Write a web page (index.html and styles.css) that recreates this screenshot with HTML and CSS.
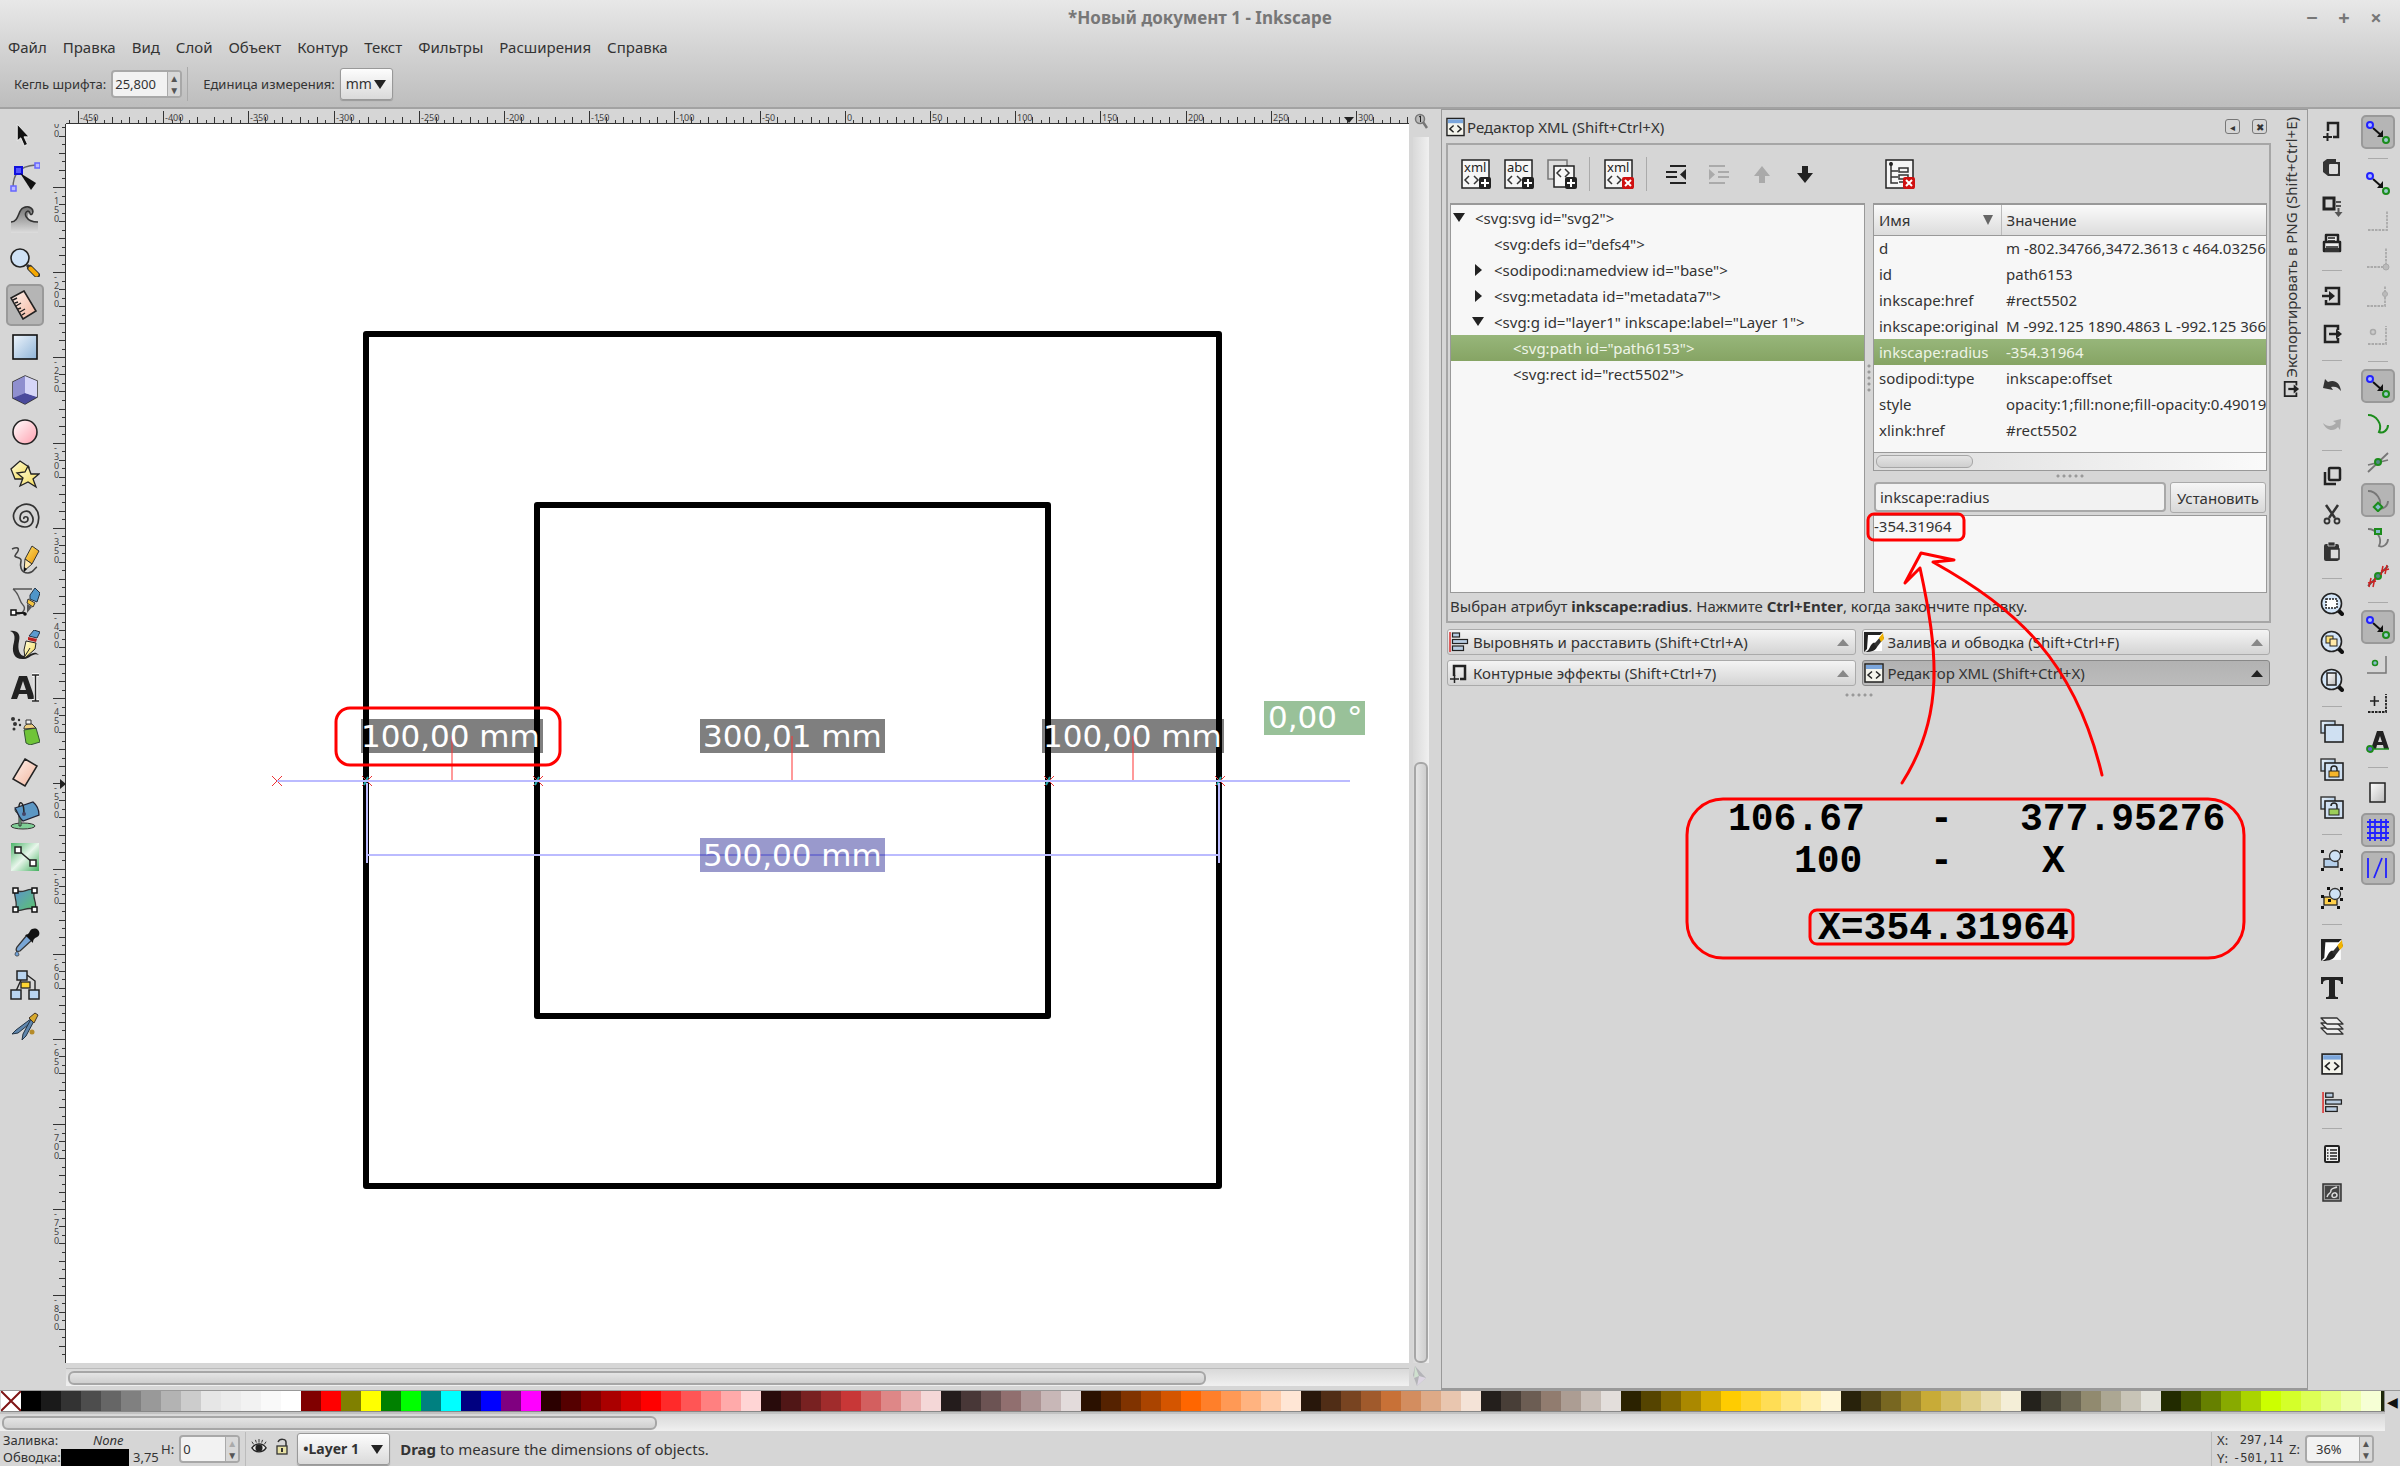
FILE: index.html
```html
<!DOCTYPE html>
<html lang="ru">
<head>
<meta charset="utf-8">
<title>*Новый документ 1 - Inkscape</title>
<link rel="stylesheet" href="styles.css">
</head>
<body>
<svg class="defs" width="0" height="0" aria-hidden="true">
  <defs>
    <linearGradient id="gBlue" x1="0" y1="0" x2="1" y2="1"><stop offset="0" stop-color="#eef5fc"/><stop offset="1" stop-color="#8fb4d8"/></linearGradient>
    <linearGradient id="gPink" x1="0" y1="0" x2="1" y2="1"><stop offset="0" stop-color="#fff"/><stop offset="1" stop-color="#ff9fae"/></linearGradient>
    <linearGradient id="gPeach" x1="0" y1="0" x2="1" y2="1"><stop offset="0" stop-color="#fff3ee"/><stop offset="1" stop-color="#f2b49c"/></linearGradient>
    <linearGradient id="gYellow" x1="0" y1="0" x2="1" y2="1"><stop offset="0" stop-color="#fffde0"/><stop offset="1" stop-color="#f3d94e"/></linearGradient>
    <linearGradient id="gOrange" x1="0" y1="0" x2="1" y2="1"><stop offset="0" stop-color="#ffe36a"/><stop offset="1" stop-color="#e58e00"/></linearGradient>
    <linearGradient id="gGreen" x1="0" y1="0" x2="1" y2="1"><stop offset="0" stop-color="#4db56a"/><stop offset="0.5" stop-color="#e8f6eb"/><stop offset="1" stop-color="#43b05f"/></linearGradient>
    <linearGradient id="gMesh" x1="0" y1="0" x2="1" y2="1"><stop offset="0" stop-color="#5c93cf"/><stop offset="1" stop-color="#5cc46b"/></linearGradient>
    <linearGradient id="gGrey" x1="0" y1="0" x2="0" y2="1"><stop offset="0" stop-color="#777"/><stop offset="1" stop-color="#ddd"/></linearGradient>
    <linearGradient id="gPage" x1="0" y1="0" x2="1" y2="1"><stop offset="0" stop-color="#fff"/><stop offset="1" stop-color="#bbb"/></linearGradient>
    <symbol id="snap" viewBox="0 0 24 24"><path d="M7 8l9 8" stroke="#111" stroke-width="2"/><path d="M17 17v-7l-6 7z" fill="#111"/><circle cx="4" cy="5" r="3" fill="#aab8ff" stroke="#22f" stroke-width="2"/><circle cx="20" cy="20" r="3" fill="#9cc" stroke="#1c8c1c" stroke-width="2"/></symbol>
    <symbol id="badge-add" viewBox="0 0 12 12"><rect width="12" height="12" rx="2" fill="#222"/><path d="M6 2v8M2 6h8" stroke="#fff" stroke-width="2"/></symbol>
    <symbol id="badge-del" viewBox="0 0 12 12"><rect width="12" height="12" rx="2" fill="#d01010"/><path d="M3 3l6 6M9 3l-6 6" stroke="#fff" stroke-width="2"/></symbol>
    <symbol id="xmlwin" viewBox="0 0 20 20"><rect x="1" y="1" width="18" height="18" fill="#f4f4ec" stroke="#222" stroke-width="1.500"/><rect x="2" y="2" width="16" height="4" fill="#7ba6dc"/><path d="M8 8.500l-4 3.500 4 3.500M12 8.500l4 3.500-4 3.500" fill="none" stroke="#222" stroke-width="1.500"/></symbol>
    <symbol id="effects" viewBox="0 0 20 20"><path d="M5 13V3h11v13h-5" fill="none" stroke="#222" stroke-width="2.500"/><path d="M1 16h9M5.500 12v8" stroke="#222" stroke-width="1.500"/></symbol>
    <symbol id="align" viewBox="0 0 20 20"><path d="M1 0v20" stroke="#d33" stroke-width="1.500"/><g fill="#b9cde2" stroke="#222" stroke-width="1.200"><rect x="3.500" y="1" width="7" height="4"/><rect x="3.500" y="7.500" width="15" height="4"/><rect x="3.500" y="14" width="11" height="4.500"/></g></symbol>
    <symbol id="fill" viewBox="0 0 20 20"><rect x="1" y="1" width="17" height="18" fill="#fff"/><path d="M0 0h19l-3 3H4L3 17l-3 3z" fill="#222"/><path d="M1 20c5-1 4-6 8-9 2-1 5 1 4 4-1 3-5 5-12 5z" fill="#222"/><path d="M10 12l8-9 2 3-7 9z" fill="#333"/><path d="M15 6l4-5 1 6-3 3z" fill="#f2b300"/></symbol>
    <symbol id="export" viewBox="0 0 20 20"><path d="M16 6V2H3v16h13v-4" fill="none" stroke="#222" stroke-width="2"/><path d="M7 10h8" stroke="#222" stroke-width="2.500"/><path d="M13 5l6 5-6 5z" fill="#222"/></symbol>
    <symbol id="magnify" viewBox="0 0 24 24"><path d="M18 18l4 4" stroke="#111" stroke-width="4" stroke-linecap="round"/><circle cx="11.500" cy="11.500" r="10" fill="#d4e6f8" stroke="#222" stroke-width="1.600"/></symbol>
    <symbol id="twin" viewBox="0 0 24 24"><rect x="1" y="1" width="14" height="12" fill="url(#gBlue)" stroke="#333" stroke-width="1.400"/><rect x="5" y="5" width="18" height="17" fill="#cfe0f2" stroke="#222" stroke-width="1.600"/></symbol>
  </defs>
</svg>

<header class="top">
  <div class="titlebar">
    <h1>*Новый документ 1 - Inkscape</h1>
    <div class="winbtns"><button aria-label="Свернуть">−</button><button aria-label="Развернуть">+</button><button aria-label="Закрыть">×</button></div>
  </div>
  <nav class="menubar">
    <button>Файл</button><button>Правка</button><button>Вид</button><button>Слой</button><button>Объект</button><button>Контур</button><button>Текст</button><button>Фильтры</button><button>Расширения</button><button>Справка</button>
  </nav>
  <div class="options">
    <label for="fontsize">Кегль шрифта:</label>
    <span class="spin"><input id="fontsize" class="w54" value="25,800"><span class="arrows"><button aria-label="Больше">▲</button><button aria-label="Меньше">▼</button></span></span>
    <span class="vsep"></span>
    <label for="unit">Единица измерения:</label>
    <span class="combo unit"><select id="unit"><option>mm</option></select></span>
  </div>
</header>

<main class="work">
  <div class="toolbox">
    <button aria-label="Выделитель"><svg viewBox="0 0 30 30"><path d="M7.300 4.300v16.500l3.500-3 3.500 8 3.200-1.500-3.500-7.500h5z" fill="#111" stroke="#fff" stroke-width=".8"/></svg></button>
    <button aria-label="Узлы"><svg viewBox="0 0 30 30"><path d="M3 26C3 13 8 4 26 3" fill="none" stroke="#666" stroke-width="1.400"/><g fill="#bbf" stroke="#66f" stroke-width="1.500"><rect x="1" y="24" width="5" height="5"/><rect x="25" y="1" width="5" height="5"/></g><rect x="5" y="5" width="7" height="7" fill="#55f" stroke="#11d" stroke-width="2"/><path d="M10 11l16 10-5 7z" fill="#111"/></svg></button>
    <button aria-label="Корректор"><svg viewBox="0 0 30 30"><path d="M1 17c8 0 7-13 14-14 5-1 8 1 7 4-1 2-4 0-4 3-1 4 3 6 10 7v11H1z" fill="url(#gGrey)"/><path d="M1 17c8 0 7-12 12-14 6-3 12 1 9 6-3 2-1-3-4-3-5 1-3 11 10 11" fill="none" stroke="#333" stroke-width="1.600"/></svg></button>
    <button aria-label="Масштаб"><svg viewBox="0 0 30 30"><path d="M17 18l3 3" stroke="#333" stroke-width="3"/><path d="M20 21l7 7" stroke="#333" stroke-width="6" stroke-linecap="round"/><path d="M20.500 21.500l6 6" stroke="#f6a800" stroke-width="4" stroke-linecap="round"/><circle cx="10" cy="11" r="9" fill="#cfe2f6" stroke="#222" stroke-width="1.600"/></svg></button>
    <button class="on" aria-label="Измеритель"><svg viewBox="0 0 30 30"><path d="M1 8L14 1l12 20-13 8z" fill="url(#gPeach)" stroke="#222" stroke-width="1.600"/><path d="M3 10l4-2M5 13l3-1M6 16l5-3M8 19l3-1M10 22l5-3M12 25l3-2" stroke="#222" stroke-width="1.400"/></svg></button>
    <button aria-label="Прямоугольник"><svg viewBox="0 0 30 30"><rect x="3" y="3" width="24" height="24" fill="url(#gBlue)" stroke="#111" stroke-width="1.600"/></svg></button>
    <button aria-label="Параллелепипед"><svg viewBox="0 0 30 30"><path d="M15 1l12 5v16l-12 7-12-6V7z" fill="#b8b8ea" stroke="#333" stroke-width="1.500"/><path d="M15 1L3 7v16l12-5z" fill="#8f8fcf"/><path d="M3 23l12-5 12 4-12 7z" fill="#4a4a9c"/><path d="M15 1l12 5v16l-12-4z" fill="#d6d6f8"/></svg></button>
    <button aria-label="Эллипс"><svg viewBox="0 0 30 30"><circle cx="15" cy="15" r="12" fill="url(#gPink)" stroke="#222" stroke-width="1.600"/></svg></button>
    <button aria-label="Звезда"><svg viewBox="0 0 30 30"><path d="M10 1l9 6-2 12H5L1 9z" fill="url(#gYellow)" stroke="#222" stroke-width="1.300"/><path d="M18 6l3 8h8l-6 5 3 8-8-5-8 4 3-8-6-5 8-1z" fill="url(#gYellow)" stroke="#222" stroke-width="1.300"/></svg></button>
    <button aria-label="Спираль"><svg viewBox="0 0 30 30"><path d="M14 17c-1-3 4-3 4 0 0 5-8 4-8-1 0-7 8-9 11-4 5 7 0 13-6 13C6 25 2 17 4 11 7 3 16 0 23 4c7 5 7 15 3 22" fill="none" stroke="#333" stroke-width="1.700"/></svg></button>
    <button aria-label="Карандаш"><svg viewBox="0 0 30 30"><path d="M2 4c7-3 8 0 4 5-4 5 6 2 5 7-1 4-1 12 7 12 6 0 6-5 9-6" fill="none" stroke="#444" stroke-width="1.600"/><path d="M15 14l7-13 7 5-7 13z" fill="url(#gOrange)" stroke="#333"/><path d="M15 14l7 5-8 7z" fill="#ffe9b0" stroke="#333"/><path d="M14 22l3 2-3 3z" fill="#111"/></svg></button>
    <button aria-label="Перо"><svg viewBox="0 0 30 30"><path d="M3 2h19M3 2c7 5 6 13 10 16 3 3 1 9-6 9" fill="none" stroke="#555" stroke-width="1.400"/><path d="M4 26h11" stroke="#111" stroke-width="1.800"/><rect x="1" y="23" width="5" height="5" fill="#fff" stroke="#111" stroke-width="1.500"/><circle cx="15" cy="27" r="1.800" fill="#111"/><path d="M20 8l5-7 5 5-3 9-7-3z" fill="#4f95c9" stroke="#234"/><path d="M18 12l7 4-2 4-6-4z" fill="#f6c644" stroke="#333"/><path d="M17 17l5 3-5 6z" fill="#555"/></svg></button>
    <button aria-label="Каллиграфическое перо"><svg viewBox="0 0 30 30"><path d="M0 1c7-1 11 3 9 10-2 9 1 16 7 15 5-1 8-6 13-1-6-3-8 3-15 4C4 30 1 22 4 12c1-5 1-9-4-11z" fill="#222"/><path d="M19 6l5-6 6 2-3 6z" fill="#5b9bd0" stroke="#234"/><path d="M18 7l9 2-1 3-8-2z" fill="#b22"/><path d="M16 11l10 2-1 6-10 9-1-8z" fill="url(#gYellow)" stroke="#222"/><path d="M15 26l5-8" stroke="#222"/></svg></button>
    <button aria-label="Текст"><svg viewBox="0 0 30 30"><path d="M1 27L9 4h8l8 23h-7l-1-5H9l-2 5zm9-9h6l-3-9z" fill="#222" fill-rule="evenodd"/><path d="M22 3h7M22 29h7M25.500 3v26" stroke="#fff" stroke-width="3.500"/><path d="M22 3h7M22 29h7M25.500 3v26" stroke="#222" stroke-width="1.500"/></svg></button>
    <button aria-label="Распылитель"><svg viewBox="0 0 30 30"><g fill="#333"><circle cx="3" cy="4" r="2"/><circle cx="5" cy="9" r="2"/><circle cx="4" cy="14" r="1.500"/><circle cx="9" cy="5" r="1.200"/><circle cx="10" cy="10" r="1.200"/></g><path d="M14 15l12-2 4 14-10 3-4-2z" fill="#6fc438" stroke="#353"/><path d="M14 14c0-4 3-6 8-5l4 4z" fill="#f0d080" stroke="#333"/><path d="M16 5h5v4h-5z" fill="#eee" stroke="#333"/></svg></button>
    <button aria-label="Ластик"><svg viewBox="0 0 30 30"><path d="M15 2l12 7-12 20-12-7z" fill="url(#gPeach)" stroke="#222" stroke-width="1.500"/></svg></button>
    <button aria-label="Заливка"><svg viewBox="0 0 30 30"><ellipse cx="13" cy="26" rx="12" ry="3" fill="#7fce96" stroke="#333"/><path d="M5 9C5 14 9 12 9 18v8h2v-8l4 1z" fill="#7fce96" stroke="#333"/><path d="M5 8l18-6c5 4 6 9 6 13l-16 6C9 18 8 13 5 8z" fill="#5c97c4" stroke="#223" stroke-width="1.300"/><path d="M9 7c0-7 5-6 5 7" fill="none" stroke="#222" stroke-width="1.500"/><circle cx="14" cy="14" r="2" fill="#446"/></svg></button>
    <button aria-label="Градиент"><svg viewBox="0 0 30 30"><rect x="1" y="1" width="28" height="28" fill="url(#gGreen)"/><path d="M8 8l15 13" stroke="#222" stroke-width="1.500"/><g fill="#fff" stroke="#222" stroke-width="1.500"><rect x="5" y="5" width="6" height="6"/><rect x="20" y="18" width="6" height="6"/></g></svg></button>
    <button aria-label="Сетка градиента"><svg viewBox="0 0 30 30"><path d="M5 5c8 5 12-3 20 0-4 8 3 12 0 20-8-5-12 3-20 0 4-8-2-12 0-20z" fill="url(#gMesh)" stroke="#333" stroke-width="1.300"/><g fill="#fff" stroke="#111" stroke-width="1.500"><rect x="3" y="3" width="5" height="5"/><rect x="22" y="3" width="5" height="5"/><rect x="3" y="22" width="5" height="5"/><rect x="22" y="22" width="5" height="5"/></g></svg></button>
    <button aria-label="Пипетка"><svg viewBox="0 0 30 30"><path d="M17 8l5 5L10 24c-3 1-5 0-3-4z" fill="#79a6d6" stroke="#333" stroke-width="1.300"/><path d="M15 8c3 0 4-2 5-4 2-3 6-3 8-1s2 6-1 7c-2 1-4 2-4 6z" fill="#111"/><path d="M7 24c3 4 2 5 0 5s-3-2 0-5z" fill="#6fa1d8" stroke="#333" stroke-width=".8"/></svg></button>
    <button aria-label="Соединительные линии"><svg viewBox="0 0 30 30"><path d="M11 10L6 21M17 5l8 6v10" fill="none" stroke="#222" stroke-width="1.400"/><g fill="#b9d4ef" stroke="#222" stroke-width="1.500"><rect x="7" y="1" width="10" height="9"/><rect x="1" y="20" width="10" height="9"/><rect x="19" y="20" width="10" height="9"/></g><rect x="11" y="12" width="9" height="6" fill="#ffd633" stroke="#222" stroke-width="1.300"/></svg></button>
    <button aria-label="Контурные эффекты"><svg viewBox="0 0 30 30"><path d="M22 6L6 18l-4 4 6-1L23 9z" fill="#5f86ad" stroke="#234"/><path d="M24 9l-8 15-4 4 1-6 8-15z" fill="#5f86ad" stroke="#234"/><path d="M19 6l6-5 3 2-4 8z" fill="#d8a92c" stroke="#432"/><circle cx="22" cy="20" r="2.500" fill="#b58b2a"/></svg></button>
  </div>

  <section class="view">
    <svg class="ruler-h" id="rulerH" aria-hidden="true"></svg>
    <svg class="ruler-v" id="rulerV" aria-hidden="true"></svg>
    <div class="canvas">
      <svg class="drawing" role="img" aria-label="Измерения">
        <g fill="none" stroke="#000" stroke-width="6" stroke-linejoin="round"><rect x="300" y="210" width="853" height="852"/><rect x="471" y="381" width="511" height="511"/></g>
        <path d="M206 652l10 10m0-10l-10 10M296 652l10 10m0-10l-10 10M467 652l10 10m0-10l-10 10M978 652l10 10m0-10l-10 10M1149 652l10 10m0-10l-10 10" fill="none" stroke="#e33"/>
        <path d="M302 653l-4 8M473 653l-4 8M984 653l-4 8M1155 653l-4 8" stroke="#2aa" stroke-width="2"/>
        <path d="M211 657H1284M301 731H1153M301 659v80M1153 659v80" stroke="#bbf" stroke-width="2" fill="none"/>
        <g fill="#000" fill-opacity=".5"><rect x="295" y="595" width="182" height="34"/><rect x="634" y="595" width="185" height="34"/><rect x="976" y="595" width="182" height="34"/></g>
        <rect x="634" y="714" width="185" height="34" fill="#00007f" fill-opacity=".4"/>
        <rect x="1198" y="577" width="101" height="34" fill="#99c199"/>
        <path d="M386 612v44M726 612v44M1067 612v44" stroke="#f33" stroke-opacity=".5" stroke-width="2"/>
        <g class="measure"><text x="295" y="623">100,00 mm</text><text x="637" y="623">300,01 mm</text><text x="977" y="623">100,00 mm</text><text x="637" y="742">500,00 mm</text><text x="1202" y="604">0,00 °</text></g>
        <rect x="270" y="584" width="224" height="57" rx="14" fill="none" stroke="red" stroke-width="3"/>
      </svg>
    </div>
    <div class="vscroll">
      <svg viewBox="0 0 14 16" width="14" height="16"><circle cx="6" cy="6" r="4.500" fill="#bbb" stroke="#777" stroke-width="1.500"/><path d="M9 9l4 6" stroke="#777" stroke-width="2.500"/><path d="M5 4l1.500-1v6" fill="none" stroke="#222"/></svg>
      <div class="vtrough"><div class="thumb"></div></div>
    </div>
    <div class="hscroll"><div class="thumb"></div></div>
    <svg class="cms" viewBox="0 0 16 20" width="16" height="20"><path d="M3 0l11 12-9 8L1 9z" fill="#b4b4b8"/><path d="M3 0l4 10-5 2z" fill="#cfe0cf"/><path d="M7 10l7 2-9 8z" fill="#dcd5e2"/></svg>
  </section>

  <aside class="dock">
    <div class="dock-main">
      <div class="dock-title"><svg width="19" height="22"><use href="#xmlwin"/></svg><span>Редактор XML (Shift+Ctrl+X)</span><button aria-label="Свернуть панель">◂</button><button aria-label="Закрыть панель">✖</button></div>
      <section class="xml">
        <div class="xmlbar">
          <button aria-label="Новый элемент"><svg viewBox="0 0 30 30"><rect x="1" y="1" width="27" height="28" fill="#f6f6f6" stroke="#222" stroke-width="1.500"/><path d="M8 17l-4 4 4 4M13 17l4 4-4 4" fill="none" stroke="#333" stroke-width="1.500"/><text x="3" y="13" class="ico-t">xml</text><use href="#badge-add" x="18" y="18" width="12" height="12"/></svg></button>
          <button aria-label="Новый текст"><svg viewBox="0 0 30 30"><rect x="1" y="1" width="27" height="28" fill="#f6f6f6" stroke="#222" stroke-width="1.500"/><path d="M8 17l-4 4 4 4M13 17l4 4-4 4" fill="none" stroke="#333" stroke-width="1.500"/><text x="3" y="13" class="ico-t">abc</text><use href="#badge-add" x="18" y="18" width="12" height="12"/></svg></button>
          <button aria-label="Дублировать узел"><svg viewBox="0 0 30 30"><rect x="1" y="1" width="19" height="19" fill="#ddd" stroke="#777" stroke-width="1.500"/><rect x="7" y="7" width="20" height="21" fill="#f6f6f6" stroke="#222" stroke-width="1.500"/><path d="M14 10l-4 4 4 4M18 10l4 4-4 4" fill="none" stroke="#333" stroke-width="1.500"/><use href="#badge-add" x="18" y="18" width="12" height="12"/></svg></button>
          <i></i>
          <button aria-label="Удалить узел"><svg viewBox="0 0 30 30"><rect x="1" y="1" width="27" height="28" fill="#f6f6f6" stroke="#222" stroke-width="1.500"/><path d="M8 17l-4 4 4 4M13 17l4 4-4 4" fill="none" stroke="#333" stroke-width="1.500"/><text x="3" y="13" class="ico-t">xml</text><use href="#badge-del" x="18" y="18" width="12" height="12"/></svg></button>
          <i></i>
          <button aria-label="Уменьшить отступ"><svg viewBox="0 0 30 30"><path d="M9 7h16M5 13h11M5 18h11M9 24h16" stroke="#222" stroke-width="2"/><path d="M25 10v11l-6-5.500z" fill="#222"/></svg></button>
          <button aria-label="Увеличить отступ" disabled><svg viewBox="0 0 30 30"><path d="M5 7h16M14 13h11M14 18h11M5 24h16" stroke="#aaa" stroke-width="2"/><path d="M5 10v11l6-5.500z" fill="#aaa"/></svg></button>
          <button aria-label="Вверх" disabled><svg viewBox="0 0 30 30"><path d="M15 7l8 10h-5v7h-6v-7H7z" fill="#aaa"/></svg></button>
          <button aria-label="Вниз"><svg viewBox="0 0 30 30"><path d="M15 24l8-10h-5V7h-6v7H7z" fill="#222"/></svg></button>
          <button class="delattr" aria-label="Удалить атрибут"><svg viewBox="0 0 30 30"><rect x="1" y="1" width="27" height="28" fill="#f6f6f6" stroke="#222" stroke-width="1.500"/><path d="M6 3v21h7M6 12h7M6 18h7M14 9h9v4h-9zM14 16h9v4h-9zM14 23h5" fill="none" stroke="#333" stroke-width="1.500"/><circle cx="6" cy="5" r="2" fill="#222"/><use href="#badge-del" x="18" y="18" width="12" height="12"/></svg></button>
        </div>
        <div class="panes">
          <ul class="tree">
            <li class="l0 open">&lt;svg:svg id="svg2"&gt;</li>
            <li class="l1">&lt;svg:defs id="defs4"&gt;</li>
            <li class="l1 closed">&lt;sodipodi:namedview id="base"&gt;</li>
            <li class="l1 closed">&lt;svg:metadata id="metadata7"&gt;</li>
            <li class="l1 open">&lt;svg:g id="layer1" inkscape:label="Layer 1"&gt;</li>
            <li class="l2 sel">&lt;svg:path id="path6153"&gt;</li>
            <li class="l2">&lt;svg:rect id="rect5502"&gt;</li>
          </ul>
          <div class="grip grip-v"></div>
          <div class="attrs">
            <div class="attr-list">
              <table>
                <thead><tr><th>Имя<span class="sort"></span></th><th>Значение</th></tr></thead>
                <tbody>
                  <tr><td>d</td><td>m -802.34766,3472.3613 c 464.03256,0</td></tr>
                  <tr><td>id</td><td>path6153</td></tr>
                  <tr><td>inkscape:href</td><td>#rect5502</td></tr>
                  <tr><td>inkscape:original</td><td>M -992.125 1890.4863 L -992.125 3664</td></tr>
                  <tr class="sel"><td>inkscape:radius</td><td>-354.31964</td></tr>
                  <tr><td>sodipodi:type</td><td>inkscape:offset</td></tr>
                  <tr><td>style</td><td>opacity:1;fill:none;fill-opacity:0.49019608</td></tr>
                  <tr><td>xlink:href</td><td>#rect5502</td></tr>
                </tbody>
              </table>
              <div class="trough"><div class="thumb"></div></div>
            </div>
            <div class="grip grip-h"></div>
            <div class="setrow"><input aria-label="Имя атрибута" value="inkscape:radius"><button>Установить</button></div>
            <textarea aria-label="Значение атрибута">-354.31964</textarea>
          </div>
        </div>
        <p class="hint">Выбран атрибут <b>inkscape:radius</b>. Нажмите <b>Ctrl+Enter</b>, когда закончите правку.</p>
      </section>
      <div class="tabs">
        <button><svg width="20" height="20"><use href="#align"/></svg>Выровнять и расставить (Shift+Ctrl+A)<span class="up"></span></button>
        <button><svg width="20" height="20"><use href="#fill"/></svg>Заливка и обводка (Shift+Ctrl+F)<span class="up"></span></button>
        <button><svg width="20" height="20"><use href="#effects"/></svg>Контурные эффекты (Shift+Ctrl+7)<span class="up"></span></button>
        <button class="on"><svg width="20" height="20"><use href="#xmlwin"/></svg>Редактор XML (Shift+Ctrl+X)<span class="up"></span></button>
      </div>
      <div class="grip grip-h"></div>
    </div>
    <div class="side"><button class="sidetab"><span>Экспортировать в PNG (Shift+Ctrl+E)</span></button><svg width="18" height="18"><use href="#export"/></svg></div>
    <svg class="notes" role="img" aria-label="Пропорция">
      <g fill="none" stroke="red" stroke-width="3" stroke-linejoin="round" stroke-linecap="round" transform="translate(-1442 -109)">
        <rect x="1868" y="513" width="96" height="26" rx="6"/>
        <rect x="1687" y="798" width="557" height="159" rx="36"/>
        <rect x="1810" y="909" width="263" height="34" rx="7"/>
        <path d="M1902 782C1945 715 1938 650 1920 567L1905 582 1921 552 1954 559 1933 561C2017 608 2075 660 2102 774"/>
      </g>
      <g class="calc"><text x="286" y="720">106.67</text><text x="488" y="720">-</text><text x="578" y="720">377.95276</text><text x="352" y="762">100</text><text x="488" y="762">-</text><text x="600" y="762">X</text><text x="376" y="829">X=354.31964</text></g>
    </svg>
  </aside>

  <div class="commands">
    <button aria-label="Создать"><svg viewBox="0 0 24 24"><path d="M8 13V5h10v14h-5" fill="none" stroke="#222" stroke-width="2.500"/><path d="M3 19h9M7.500 15v8" stroke="#222" stroke-width="2"/></svg></button>
    <button aria-label="Открыть"><svg viewBox="0 0 24 24"><path d="M3 6l4-3h9v3h4v14H8L3 16z" fill="#333"/><rect x="9" y="8" width="9" height="10" rx="1" fill="#ddd"/></svg></button>
    <button aria-label="Сохранить"><svg viewBox="0 0 24 24"><rect x="4" y="4" width="10" height="11" fill="none" stroke="#222" stroke-width="3"/><path d="M16 8h5M16 12h5" stroke="#555" stroke-width="2"/><path d="M18.500 14v4" stroke="#555" stroke-width="2"/><path d="M14.500 18h8l-4 5z" fill="#555"/></svg></button>
    <button aria-label="Печать"><svg viewBox="0 0 24 24"><path d="M6 10V3h12v7M4 10h16v9H4z" fill="#eee" stroke="#222" stroke-width="2.500" stroke-linejoin="round"/><path d="M8 6h7M8 9h7M6 15h12" stroke="#222" stroke-width="1.500"/><path d="M5 16h14v4H5z" fill="#333"/></svg></button>
    <hr>
    <button aria-label="Импорт"><svg viewBox="0 0 24 24"><path d="M6 8V4h13v16H6v-4" fill="none" stroke="#222" stroke-width="2.500"/><path d="M2 12h8" stroke="#222" stroke-width="2.500"/><path d="M9 7l6 5-6 5z" fill="#222"/></svg></button>
    <button aria-label="Экспорт"><svg viewBox="0 0 24 24"><path d="M18 8V4H5v16h13v-4" fill="none" stroke="#222" stroke-width="2.500"/><path d="M9 12h8" stroke="#222" stroke-width="2.500"/><path d="M16 7l6 5-6 5z" fill="#222"/></svg></button>
    <hr>
    <button aria-label="Отменить"><svg viewBox="0 0 24 24"><path d="M3 14l2-9 3 3c6-3 12 0 13 9-3-4-6-5-10-4l2 3z" fill="#333"/></svg></button>
    <button aria-label="Повторить" disabled><svg viewBox="0 0 24 24"><path d="M21 7l-8 2 3 2c-4 4-9 4-13 0 3 8 11 9 15 4l2 3z" fill="#aaa"/></svg></button>
    <hr>
    <button aria-label="Копировать"><svg viewBox="0 0 24 24"><rect x="9" y="4" width="11" height="12" rx="1" fill="none" stroke="#222" stroke-width="2.500"/><path d="M5 8v12h11" fill="none" stroke="#222" stroke-width="2.500"/></svg></button>
    <button aria-label="Вырезать"><svg viewBox="0 0 24 24"><path d="M6 3l9 13M18 3L9 16" stroke="#333" stroke-width="2.500"/><circle cx="7" cy="19" r="2.500" fill="none" stroke="#333" stroke-width="1.800"/><circle cx="17" cy="19" r="2.500" fill="none" stroke="#333" stroke-width="1.800"/></svg></button>
    <button aria-label="Вставить"><svg viewBox="0 0 24 24"><rect x="4" y="4" width="15" height="17" rx="2" fill="#333"/><path d="M8 2h7v4H8z" fill="#333" stroke="#ddd" stroke-width=".8"/><rect x="10" y="9" width="9" height="10" fill="#ddd" stroke="#333" stroke-width="1.500"/></svg></button>
    <hr>
    <button aria-label="Масштаб по выделению"><svg viewBox="0 0 24 24"><use href="#magnify"/><rect x="6" y="7" width="11" height="9" fill="#fff" stroke="#222" stroke-width="1.500" stroke-dasharray="2 1"/></svg></button>
    <button aria-label="Масштаб по рисунку"><svg viewBox="0 0 24 24"><use href="#magnify"/><rect x="6" y="6" width="7" height="7" fill="#ffe27a" stroke="#222"/><rect x="10" y="9" width="7" height="7" fill="#ffe9a8" stroke="#222"/></svg></button>
    <button aria-label="Масштаб по странице"><svg viewBox="0 0 24 24"><use href="#magnify"/><rect x="7" y="5" width="9" height="12" fill="url(#gPage)" stroke="#222" stroke-width="1.500"/></svg></button>
    <hr>
    <button aria-label="Дублировать"><svg viewBox="0 0 24 24"><use href="#twin"/></svg></button>
    <button aria-label="Клонировать"><svg viewBox="0 0 24 24"><use href="#twin"/><path d="M11 13v-2c0-4 6-4 6 0v2" fill="none" stroke="#222" stroke-width="1.500"/><rect x="9" y="13" width="10" height="6" fill="#f5b52a" stroke="#222"/></svg></button>
    <button aria-label="Отсоединить клон"><svg viewBox="0 0 24 24"><use href="#twin"/><path d="M11 10c0-4 6-4 6 0v4" fill="none" stroke="#222" stroke-width="1.500"/><rect x="9" y="13" width="10" height="6" fill="#9cce5a" stroke="#222"/></svg></button>
    <hr>
    <button aria-label="Сгруппировать"><svg viewBox="0 0 24 24"><path d="M4 11h7l7 3v5H4z" fill="#b5cfea" stroke="#222" stroke-width="1.300"/><circle cx="15" cy="8" r="5.500" fill="#cfe2f5" stroke="#333" stroke-width="1.300"/><path d="M1 2h3v3H1zM20 2h3v3h-3zM1 20h3v3H1zM20 20h3v3h-3z" fill="#111"/></svg></button>
    <button aria-label="Разгруппировать"><svg viewBox="0 0 24 24"><rect x="4" y="11" width="13" height="8" fill="#ffd04a" stroke="#222" stroke-width="1.300"/><circle cx="15" cy="8" r="5.500" fill="#cfe2f5" stroke="#333" stroke-width="1.300"/><path d="M7 1h3v3H7zM20 1h3v3h-3zM1 9h3v3H1zM20 12h3v3h-3zM1 20h3v3H1zM17 20h3v3h-3zM8 13h3v3H8z" fill="#111"/></svg></button>
    <hr>
    <button aria-label="Заливка и обводка"><svg viewBox="0 0 24 24"><use href="#fill" x="1" y="1" width="22" height="22"/></svg></button>
    <button aria-label="Текст и шрифт"><svg viewBox="0 0 24 24"><path d="M1 1h22v7h-2c0-3-1-4-6-4v15c0 2 1 2 3 2v2H6v-2c2 0 3 0 3-2V4C4 4 3 5 3 8H1z" fill="#222"/></svg></button>
    <button aria-label="Слои"><svg viewBox="0 0 24 24"><g fill="#eee" stroke="#333" stroke-width="1.300" stroke-linejoin="round"><path d="M1 14h16l6 6H7z"/><path d="M1 9h16l6 6H7z"/><path d="M1 4h16l6 6H7z"/></g></svg></button>
    <button aria-label="Редактор XML"><svg viewBox="0 0 24 24"><use href="#xmlwin" x="1" y="1" width="22" height="22"/></svg></button>
    <button aria-label="Выровнять"><svg viewBox="0 0 24 24"><use href="#align" x="2" y="2" width="21" height="21"/></svg></button>
    <hr>
    <button aria-label="Настройки"><svg viewBox="0 0 24 24"><rect x="5" y="4" width="14" height="16" rx="1" fill="#eee" stroke="#222" stroke-width="2"/><path d="M10 8h7M10 11h7M10 14h7M10 17h7M7 8h1.500M7 11h1.500M7 14h1.500M7 17h1.500" stroke="#222" stroke-width="1.300"/></svg></button>
    <button aria-label="Параметры документа"><svg viewBox="0 0 24 24"><rect x="3" y="4" width="18" height="17" fill="#999" stroke="#333" stroke-width="1.500"/><rect x="5" y="6" width="14" height="13" fill="#444"/><path d="M7 17c2-6 4-2 4-7 1-2 4-2 6-3M12 16c0-4 5-4 5-1s-5 3-5 1z" fill="none" stroke="#ddd" stroke-width="1.500"/></svg></button>
  </div>

  <div class="snapbar">
    <button class="on" aria-label="Прилипание"><svg><use href="#snap"/></svg></button>
    <hr>
    <button aria-label="Рамки"><svg><use href="#snap"/></svg></button>
    <button aria-label="Края рамок" disabled><svg viewBox="0 0 24 24"><path d="M2 21h19V2" fill="none" stroke="#aaa" stroke-width="1.800" stroke-dasharray="2.500 1"/></svg></button>
    <button aria-label="Углы рамок" disabled><svg viewBox="0 0 24 24"><path d="M1 20h19V1" fill="none" stroke="#aaa" stroke-width="1.800" stroke-dasharray="2.500 1"/><circle cx="20" cy="20" r="3" fill="#bbb" stroke="#aaa"/></svg></button>
    <button aria-label="Середины краёв" disabled><svg viewBox="0 0 24 24"><path d="M1 21h18V1" fill="none" stroke="#aaa" stroke-width="1.800" stroke-dasharray="2.500 1"/><circle cx="19" cy="9" r="2.500" fill="#bbb" stroke="#aaa"/></svg></button>
    <button aria-label="Центры рамок" disabled><svg viewBox="0 0 24 24"><path d="M2 21h18V3" fill="none" stroke="#aaa" stroke-width="1.800" stroke-dasharray="2.500 1"/><circle cx="7" cy="9" r="2.500" fill="#ccc" stroke="#aaa" stroke-width="1.500"/></svg></button>
    <hr>
    <button class="on" aria-label="Узлы"><svg><use href="#snap"/></svg></button>
    <button aria-label="Контуры"><svg viewBox="0 0 24 24"><path d="M2 3c8 0 15 9 11 17 4 2 9-2 9-7" fill="none" stroke="#1c8c1c" stroke-width="2"/></svg></button>
    <button aria-label="Пересечения"><svg viewBox="0 0 24 24"><path d="M2 15l20-5M2 22L22 3" stroke="#777" stroke-width="1.800"/><circle cx="12" cy="12" r="3" fill="#588" stroke="#1c8c1c" stroke-width="2"/></svg></button>
    <button class="on" aria-label="Острые узлы"><svg viewBox="0 0 24 24"><path d="M2 3c8 0 15 9 11 17 4 2 9-2 9-7" fill="none" stroke="#777" stroke-width="1.800"/><rect x="-3" y="-3" width="6" height="6" fill="#8bc" stroke="#1c8c1c" stroke-width="2" transform="translate(12 19) rotate(45)"/></svg></button>
    <button aria-label="Сглаженные узлы"><svg viewBox="0 0 24 24"><path d="M2 3c8 0 15 9 11 17 4 2 9-2 9-7" fill="none" stroke="#777" stroke-width="1.800"/><rect x="9" y="3" width="6" height="5" fill="#8bc" stroke="#1c8c1c" stroke-width="2"/></svg></button>
    <button aria-label="Середины линий"><svg viewBox="0 0 24 24"><path d="M2 22L22 2" stroke="#555" stroke-width="1.800"/><circle cx="12" cy="12" r="3" fill="#588" stroke="#1c8c1c" stroke-width="2"/><path d="M5 14l-2 9M9 14l-2 9M2 19l8-2M17 2l-2 9M21 1l-2 9M15 7l8-2" stroke="#c22" stroke-width="1.500"/></svg></button>
    <hr>
    <button class="on" aria-label="Другие точки"><svg><use href="#snap"/></svg></button>
    <button aria-label="Центры объектов"><svg viewBox="0 0 24 24"><path d="M1 20h19V3" fill="none" stroke="#777" stroke-width="1.500"/><circle cx="9" cy="10" r="2.500" fill="#8bc" stroke="#1c8c1c" stroke-width="1.500"/></svg></button>
    <button aria-label="Центры вращения"><svg viewBox="0 0 24 24"><path d="M2 21h18V3" fill="none" stroke="#222" stroke-width="1.800" stroke-dasharray="2.500 1"/><path d="M4 10h9M8.500 5v10" stroke="#222" stroke-width="1.600"/></svg></button>
    <button aria-label="Линия шрифта"><svg viewBox="0 0 24 24"><path d="M5 20L11 2h6l6 18h-5l-1-4h-6l-1 4zm7-7h4l-2-6z" fill="#222" fill-rule="evenodd"/><path d="M4 20h19" stroke="#1c8c1c" stroke-width="1.500"/><circle cx="4" cy="20" r="3" fill="#66c" stroke="#1c8c1c" stroke-width="1.800"/></svg></button>
    <hr>
    <button aria-label="Граница страницы"><svg viewBox="0 0 24 24"><rect x="4" y="3" width="15" height="19" fill="url(#gPage)" stroke="#222" stroke-width="1.500"/></svg></button>
    <button class="on" aria-label="Сетки"><svg viewBox="0 0 24 24"><path d="M1 4h22M1 9h22M1 15h22M1 20h22M4 1v22M9 1v22M15 1v22M20 1v22" stroke="#22f" stroke-width="1.800"/></svg></button>
    <button class="on" aria-label="Направляющие"><svg viewBox="0 0 24 24"><path d="M2 2v20M8 22l8-20M20 2v20" stroke="#22f" stroke-width="1.800"/></svg></button>
  </div>
</main>

<div class="palette"><div class="swatches" id="swatches"></div><button aria-label="Меню палитры">◀</button></div>
<div class="palscroll"><div class="thumb"></div></div>

<footer class="status">
  <dl class="paint"><dt>Заливка:</dt><dd><em>None</em></dd><dt>Обводка:</dt><dd><span class="stroke"></span>3,75</dd></dl>
  <label for="opacity">Н:</label>
  <span class="spin"><input id="opacity" class="w44" value="0"><span class="arrows"><button class="dim" aria-label="Больше">▲</button><button aria-label="Меньше">▼</button></span></span>
  <span class="fsep"></span>
  <div class="layer">
    <button aria-label="Видимость слоя"><svg width="16" height="18" viewBox="0 0 18 18"><path d="M1 10c4-6 12-6 16 0-4 6-12 6-16 0z" fill="#eee" stroke="#222" stroke-width="1.500"/><circle cx="9" cy="10" r="4" fill="#222"/><path d="M3 6L1 3M6 4L5 1M9 4V0M12 4l1-3M15 6l2-3" stroke="#222"/></svg></button>
    <button aria-label="Блокировка слоя"><svg width="14" height="18" viewBox="0 0 14 18"><path d="M3 4c2-4 8-3 8 0v4" fill="none" stroke="#333" stroke-width="1.500"/><rect x="2" y="8" width="10" height="8" fill="#e8e2a4" stroke="#333" stroke-width="1.300"/><path d="M7 10v4" stroke="#333" stroke-width="2"/></svg></button>
    <span class="combo"><select aria-label="Текущий слой"><option>•Layer 1</option></select></span>
  </div>
  <p class="msg"><b>Drag</b> to measure the dimensions of objects.</p>
  <span class="fsep"></span>
  <dl class="coords"><dt>X:</dt><dd>297,14</dd><dt>Y:</dt><dd>-501,11</dd></dl>
  <label for="zoom">Z:</label>
  <span class="spin"><input id="zoom" class="w52" value="36%"><span class="arrows"><button aria-label="Больше">▲</button><button aria-label="Меньше">▼</button></span></span>
</footer>
<script src="app.js"></script>
</body>
</html>
```
FILE: styles.css
```css
* { box-sizing: border-box; }
body { margin: 0; min-height: 100vh; display: flex; flex-direction: column; background: #d6d6d6; color: #333; font-family: "Noto Sans", sans-serif; font-size: 15px; line-height: 20px; overflow: hidden; }
button { border: 0; background: none; padding: 0; margin: 0; font: inherit; color: inherit; }
input, textarea, select { font: inherit; color: inherit; margin: 0; }
ul, dl, dd, p, h1 { margin: 0; padding: 0; }
.defs { position: absolute; }

.top { background: linear-gradient(#e8e8e8, #d4d4d4 48px, #bdbdbd); border-bottom: 2px solid #a2a2a2; }
.titlebar { display: grid; grid-template-columns: 1fr auto 1fr; align-items: center; height: 35px; }
.titlebar h1 { grid-column: 2; font-size: 17px; color: #777; }
.winbtns { justify-self: end; display: flex; gap: 12px; padding-right: 14px; color: #777; font-size: 20px; font-weight: bold; }
.winbtns button { width: 20px; }
.menubar { display: flex; gap: 16px; padding: 0 8px; height: 24px; align-items: center; }
.options { display: flex; align-items: center; height: 48px; padding: 2px 14px 0; gap: 5px; font-size: 13px; }
.vsep { width: 1px; height: 34px; background: #aaa; margin-right: 10px; }
.spin { display: flex; height: 28px; border: 2px solid #a8a8a8; border-radius: 4px; background: #f2f2f2; overflow: hidden; }
.spin input { border: 0; background: none; padding: 0 2px; font-size: 13px; min-width: 0; }
.w54 { width: 54px; }
.w44 { width: 44px; }
.w52 { width: 52px; }
.arrows { display: flex; flex-direction: column; justify-content: space-around; width: 13px; border-left: 1px solid #aaa; background: #d8d8d8; font-size: 10px; line-height: 10px; color: #555; }
.dim { color: #aaa; }
.combo { position: relative; display: flex; }
.combo select { appearance: none; height: 32px; border: 1px solid #999; border-radius: 3px; background: linear-gradient(#fdfdfd, #dadada); padding: 0 5px; box-shadow: 0 1px 1px #999; }
.combo::after { content: ""; position: absolute; right: 7px; top: 12px; border: 6px solid transparent; border-top: 9px solid #222; border-bottom: 0; pointer-events: none; }
.unit select { width: 53px; font-size: 14px; }

.work { flex: 1; display: flex; min-height: 0; }
.toolbox { width: 52px; flex: none; padding: 5px 0 0 6px; display: flex; flex-direction: column; }
.toolbox button { width: 38px; height: 42px; flex: none; display: grid; place-items: center; }
.toolbox button:nth-child(even) { margin-bottom: 1px; }
.toolbox svg { width: 30px; height: 30px; }
.on { border: 2px solid #999; border-radius: 5px; background: #b5b5b5; }

.view { flex: 1; min-width: 0; display: grid; grid-template: 15px minmax(0, 1fr) 27px / 14px minmax(0, 1fr) 32px; }
.ruler-h { grid-area: 1 / 2; width: 100%; height: 15px; }
.ruler-v { grid-area: 2 / 1; width: 14px; height: 100%; }
.ruler-h text, .ruler-v text { font-size: 9px; fill: #444; }
.canvas { grid-area: 2 / 2; background: #fff; overflow: hidden; }
.drawing { display: block; width: 100%; height: 100%; }
.measure { font-family: "DejaVu Sans", sans-serif; font-size: 31px; fill: #fff; }
.vscroll { grid-area: 1 / 3 / 3 / 4; display: flex; flex-direction: column; align-items: center; gap: 8px; padding: 4px 8px 0 0; }
.vtrough { flex: 1; width: 16px; background: linear-gradient(90deg, #d9d9d9, #f0f0f0); padding: 0 1px; display: flex; align-items: flex-end; }
.thumb { border: 2px solid #a6a6a6; border-radius: 6px; background: linear-gradient(#e4e4e4, #cfcfcf); }
.vtrough .thumb { width: 100%; height: 49%; background: linear-gradient(90deg, #e4e4e4, #cfcfcf); }
.hscroll { grid-area: 3 / 2; align-self: center; height: 18px; padding: 2px; background: linear-gradient(#d9d9d9, #f0f0f0); border-top: 1px solid #bbb; }
.hscroll .thumb { width: 85%; height: 14px; }
.cms { grid-area: 3 / 3; margin: 3px 0 0 3px; }

.dock { position: relative; flex: 0 0 867px; display: flex; border: 1px solid #999; border-bottom-width: 2px; padding-left: 4px; }
.dock-main { flex: 1; min-width: 0; }
.dock-title { height: 33px; display: flex; align-items: center; gap: 2px; }
.dock-title span { flex: 1; }
.dock-title button { width: 15px; height: 15px; border: 1px solid #777; border-radius: 3px; font-size: 10px; line-height: 10px; margin-right: 10px; }
.dock-title button:last-child { margin-right: 4px; }
.xml { border: 2px solid #a6a6a6; padding: 0 2px; height: 480px; display: flex; flex-direction: column; }
.xmlbar { height: 58px; display: flex; align-items: center; gap: 5px; padding: 0 0 0 7px; }
.xmlbar button { width: 38px; height: 38px; display: grid; place-items: center; }
.xmlbar svg { width: 30px; height: 30px; }
.xmlbar i { width: 1px; height: 34px; background: #aaa; margin: 0 5px 0 3px; }
.xmlbar .delattr { margin-left: 52px; }
.ico-t { font-size: 13px; fill: #222; }
.panes { flex: 1; min-height: 0; display: grid; grid-template-columns: 415px 8px minmax(0, 1fr); }
.tree { list-style: none; background: #f7f7f7; border: 1px solid #999; border-top-width: 2px; }
.tree li { height: 26px; line-height: 26px; position: relative; white-space: nowrap; }
.tree .l0 { padding-left: 24px; }
.tree .l1 { padding-left: 43px; }
.tree .l2 { padding-left: 62px; }
.open::before, .closed::before { content: ""; position: absolute; top: 8px; margin-left: -22px; border: 6px solid transparent; }
.open::before { border-top: 9px solid #222; border-bottom: 0; }
.closed::before { top: 7px; margin-left: -19px; border-left: 7px solid #222; border-right: 0; }
.tree .sel, tr.sel { background: linear-gradient(#97b67a, #86a464); color: #eef4e6; }
.grip { background-image: radial-gradient(circle, #999 1px, transparent 2px); background-size: 6px 6px; }
.grip-v { align-self: center; height: 30px; width: 6px; margin: 0 1px 40px; }
.grip-h { width: 30px; height: 6px; margin: 3px auto; }
.attrs { display: flex; flex-direction: column; min-width: 0; }
.attr-list { border: 1px solid #999; border-top-width: 2px; background: #f7f7f7; height: 268px; flex: none; overflow: hidden; display: flex; flex-direction: column; justify-content: space-between; }
table { border-collapse: collapse; table-layout: fixed; width: 520px; white-space: nowrap; }
th { text-align: left; font-weight: normal; height: 30px; padding: 0 5px; background: linear-gradient(#fafafa, #dcdcdc); border-bottom: 1px solid #999; }
th:first-child { width: 127px; border-right: 1px solid #bbb; }
.sort { float: right; margin: 5px 3px 0 0; border: 5px solid transparent; border-top: 10px solid #666; border-bottom: 0; }
td { height: 26px; padding: 0 5px; overflow: hidden; }
.trough { border-top: 1px solid #999; padding: 2px; height: 18px; flex: none; background: linear-gradient(90deg, #ddd, #fafafa); }
.trough .thumb { width: 97px; height: 13px; border-width: 1px; }
.attrs .grip-h { margin: 2px auto; }
.setrow { display: flex; gap: 4px; padding: 1px 1px 2px; }
.setrow input { flex: 1; min-width: 0; height: 30px; border: 2px solid #a8a8a8; border-radius: 4px; background: #f2f2f2; padding: 0 4px; }
.setrow button { height: 31px; padding: 0 6px; border: 1px solid #aaa; border-radius: 3px; background: linear-gradient(#f6f6f6, #d8d8d8); }
.attrs textarea { flex: 1; min-height: 0; resize: none; border: 1px solid #999; background: #f7f7f7; padding: 0; }
.hint { height: 28px; line-height: 27px; white-space: nowrap; }
.tabs { display: grid; grid-template-columns: 1fr 1fr; gap: 5px 6px; padding: 6px 1px 3px; }
.tabs button { height: 26px; display: flex; align-items: center; gap: 4px; padding: 0 6px 0 1px; border: 1px solid #aaa; border-radius: 3px; background: linear-gradient(#f4f4f4, #d4d4d4); white-space: nowrap; }
.tabs .on { background: linear-gradient(#b2b2b2, #bcbcbc); border-color: #888; }
.up { margin-left: auto; border: 6px solid transparent; border-bottom: 7px solid #888; border-top: 0; }
.on .up { border-bottom-color: #222; }
.side { flex: 0 0 36px; display: flex; flex-direction: column; align-items: center; padding: 7px 0 0 4px; gap: 2px; }
.sidetab { writing-mode: vertical-rl; transform: rotate(180deg); white-space: nowrap; }
.notes { position: absolute; left: 0; top: 0; width: 100%; height: 100%; pointer-events: none; }
.calc { font-family: "Liberation Mono", monospace; font-weight: bold; font-size: 38px; fill: #000; }

.commands, .snapbar { flex: none; display: flex; flex-direction: column; align-items: center; }
.commands { width: 48px; padding-top: 4px; }
.snapbar { width: 44px; padding-top: 6px; }
.commands button, .snapbar button { width: 34px; height: 34px; margin-bottom: 4px; flex: none; display: grid; place-items: center; }
.commands svg, .snapbar svg { width: 24px; height: 24px; }
hr { width: 20px; height: 1px; border: 0; background: #aaa; margin: 5px 0 8px; flex: none; }
.snapbar hr { margin: 5px 0 7px; }

.palette { height: 22px; display: flex; border-top: 1px solid #999; padding-left: 1px; }
.swatches { flex: 1; display: flex; overflow: hidden; border-bottom: 1px solid #888; border-right: 1px solid #888; }
.swatches button { flex: 0 0 20px; height: 100%; }
.swatches svg { display: block; }
.palette > button { width: 15px; font-size: 14px; color: #111; line-height: 14px; }
.palscroll { height: 19px; padding: 2px 2px 3px; margin-right: 15px; border-top: 2px solid #c2c2c2; background: linear-gradient(#d8d8d8, #f0f0f0); }
.palscroll .thumb { width: 655px; height: 14px; }

.status { height: 35px; display: flex; align-items: center; font-size: 13px; padding: 1px 26px 0 3px; gap: 5px; }
.paint { display: grid; grid-template-columns: 58px auto; line-height: 17px; width: 152px; }
.paint em { padding-left: 32px; }
.paint dd { display: flex; gap: 4px; }
.stroke { width: 68px; height: 17px; background: #000; }
.fsep { width: 1px; height: 100%; border-left: 1px solid #bbb; }
.layer { display: flex; align-items: center; gap: 8px; }
.layer select { width: 93px; font-weight: bold; font-size: 14px; }
.msg { font-size: 15px; flex: 1; padding-left: 5px; }
.coords { display: grid; grid-template-columns: 16px 50px; line-height: 18px; }
.coords dd { font-family: "DejaVu Sans Mono", monospace; font-size: 12px; text-align: right; }
.status label { margin-left: 1px; }
#zoom { padding-left: 9px; }
```
FILE: app.js
```js
var NS = 'http://www.w3.org/2000/svg';
var STEP = 85.2;

function add(parent, name, attrs, text) {
  var el = document.createElementNS(NS, name);
  for (var key in attrs) el.setAttribute(key, attrs[key]);
  if (text) el.textContent = text;
  parent.appendChild(el);
}

// horizontal ruler: a label every 50 mm, ticks every 5 mm
var h = document.getElementById('rulerH'), path = 'M0 14.5H3000', i, p;
for (i = -2; i < 300; i++) {
  p = Math.round(12 + i * STEP / 10) + 0.5;
  path += 'M' + p + ' 14V' + (i % 10 === 0 ? 2 : i % 2 === 0 ? 8 : 11);
}
add(h, 'path', { d: path, stroke: '#333', fill: 'none' });
for (i = 0; i < 16; i++) add(h, 'text', { x: Math.round(14 + i * STEP), y: 12 }, String(-450 + i * 50));
add(h, 'path', { d: 'M1278 8h10l-5 6z', fill: '#222' });

// vertical ruler: digits are stacked one under another
var v = document.getElementById('rulerV');
path = 'M13.5 0V3000';
for (i = -7; i < 300; i++) {
  p = Math.round(63 + i * STEP / 10) + 0.5;
  path += 'M13 ' + p + 'H' + (i % 10 === 0 ? 1 : i % 2 === 0 ? 7 : 10);
}
add(v, 'path', { d: path, stroke: '#333', fill: 'none' });
for (i = -1; i < 14; i++) {
  String(-150 - i * 50).split('').forEach(function (c, n) {
    if (i < 0 && n < 2) return;
    add(v, 'text', { x: 2, y: Math.round(63 + i * STEP) + 8 + n * 9 }, c);
  });
}
add(v, 'path', { d: 'M8 655v10l6-5z', fill: '#222' });

var colors = ('000000 1a1a1a 333333 4d4d4d 666666 808080 999999 b3b3b3 cccccc e6e6e6 ececec f2f2f2 f9f9f9 ffffff ' +
  '800000 ff0000 808000 ffff00 008000 00ff00 008080 00ffff 000080 0000ff 800080 ff00ff ' +
  '2b0000 550000 800000 aa0000 d40000 ff0000 ff2a2a ff5555 ff8080 ffaaaa ffd5d5 ' +
  '280b0b 501616 782121 a02c2c c83737 d35f5f de8787 e9afaf f4d7d7 241c1c 483737 6c5353 916f6f ac9393 c8b7b7 e3dbdb ' +
  '2b1100 552200 803300 aa4400 d45500 ff6600 ff7f2a ff9955 ffb380 ffccaa ffe6d5 ' +
  '28170b 502d16 784421 a05a2c c87137 d38d5f deaa87 e9c6af f4e3d7 241f1c 483e37 6c5d53 917c6f ac9d93 c8beb7 e3dedb ' +
  '2b2200 554400 806600 aa8800 d4aa00 ffcc00 ffd42a ffdd55 ffe680 ffeeaa fff6d5 ' +
  '28220b 504416 786721 a0892c c8ab37 d3bc5f decd87 e9ddaf f4eed7 24221c 484537 6c6753 918a6f aca793 c8c4b7 e3e2db ' +
  '222b00 445500 668000 88aa00 aad400 ccff00 d4ff2a ddff55 e5ff80 eeffaa f6ffd5 1f280b').split(' ');
var box = document.getElementById('swatches');
var none = document.createElement('button');
none.setAttribute('aria-label', 'Нет цвета');
none.innerHTML = '<svg width="20" height="20"><rect width="20" height="20" fill="#fff"/><path d="M0 0l20 20M20 0L0 20" stroke="#801515" stroke-width="2"/></svg>';
box.appendChild(none);
colors.forEach(function (c) {
  var b = document.createElement('button');
  b.setAttribute('aria-label', '#' + c);
  b.style.background = '#' + c;
  box.appendChild(b);
});
```
